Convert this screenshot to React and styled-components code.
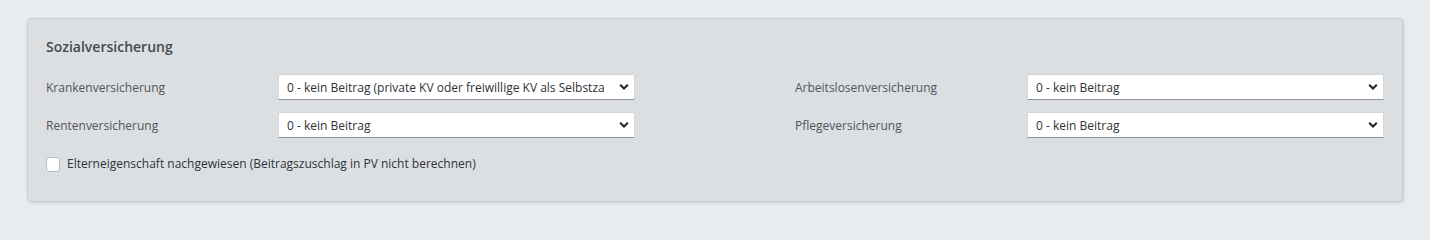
import React from 'react'
import styled, { createGlobalStyle } from 'styled-components'

const GlobalStyle = createGlobalStyle`
  html, body {
    margin: 0;
    padding: 0;
    background: #e9ecef;
    font-family: "Open Sans", "Noto Sans", "Liberation Sans", sans-serif;
  }
`

const Page = styled.div`
  padding: 18px 27px 14px 27px;
`

const Card = styled.section`
  background: #dcdfe2;
  border: 1px solid #cbced1;
  border-radius: 4px;
  box-shadow: 1px 1px 3px rgba(0, 0, 0, 0.12);
  padding: 18px 18px 28px 18px;
`

const Title = styled.h2`
  margin: 0 0 17px 0;
  font-size: 14px;
  line-height: 20px;
  font-weight: 600;
  color: #454a50;
`

const Columns = styled.div`
  display: grid;
  grid-template-columns: 1fr 1fr;
  column-gap: 160px;
`

const Column = styled.div`
  display: flex;
  flex-direction: column;
  gap: 12px;
`

const Field = styled.label`
  display: grid;
  grid-template-columns: 232px 1fr;
  align-items: center;
`

const Label = styled.span`
  font-size: 12px;
  color: #50555b;
`

const SelectWrap = styled.div`
  position: relative;
  height: 26px;
`

const Select = styled.select`
  appearance: none;
  -webkit-appearance: none;
  width: 100%;
  height: 100%;
  box-sizing: border-box;
  margin: 0;
  padding: 0 30px 0 8px;
  background: #fff;
  border: 1px solid #d4d6d8;
  border-bottom-color: #8e9296;
  border-radius: 0;
  font-family: inherit;
  font-size: 12px;
  color: #2f3338;
  outline: none;
`

const Chevron = styled.svg`
  position: absolute;
  right: 6px;
  top: 50%;
  transform: translateY(-50%);
  pointer-events: none;
`

const CheckRow = styled.label`
  display: flex;
  align-items: center;
  gap: 7px;
  margin-top: 17px;
  line-height: 18px;
  font-size: 12px;
  color: #2f3338;
`

const Box = styled.span`
  width: 14px;
  height: 15px;
  box-sizing: border-box;
  background: #fff;
  border: 1px solid #b9bcc0;
  border-radius: 3px;
`

function Dropdown({ value }) {
  return (
    <SelectWrap>
      <Select defaultValue={value}>
        <option>{value}</option>
      </Select>
      <Chevron width="10" height="7" viewBox="0 0 10 7">
        <path d="M1.2 1.2 L5 5 L8.8 1.2" fill="none" stroke="#222" strokeWidth="2" />
      </Chevron>
    </SelectWrap>
  )
}

export default function App() {
  return (
    <>
      <GlobalStyle />
      <Page>
        <Card>
          <Title>Sozialversicherung</Title>
          <Columns>
            <Column>
              <Field>
                <Label>Krankenversicherung</Label>
                <Dropdown value="0 - kein Beitrag (private KV oder freiwillige KV als Selbstzahler)" />
              </Field>
              <Field>
                <Label>Rentenversicherung</Label>
                <Dropdown value="0 - kein Beitrag" />
              </Field>
            </Column>
            <Column>
              <Field>
                <Label>Arbeitslosenversicherung</Label>
                <Dropdown value="0 - kein Beitrag" />
              </Field>
              <Field>
                <Label>Pflegeversicherung</Label>
                <Dropdown value="0 - kein Beitrag" />
              </Field>
            </Column>
          </Columns>
          <CheckRow>
            <Box />
            Elterneigenschaft nachgewiesen (Beitragszuschlag in PV nicht berechnen)
          </CheckRow>
        </Card>
      </Page>
    </>
  )
}
